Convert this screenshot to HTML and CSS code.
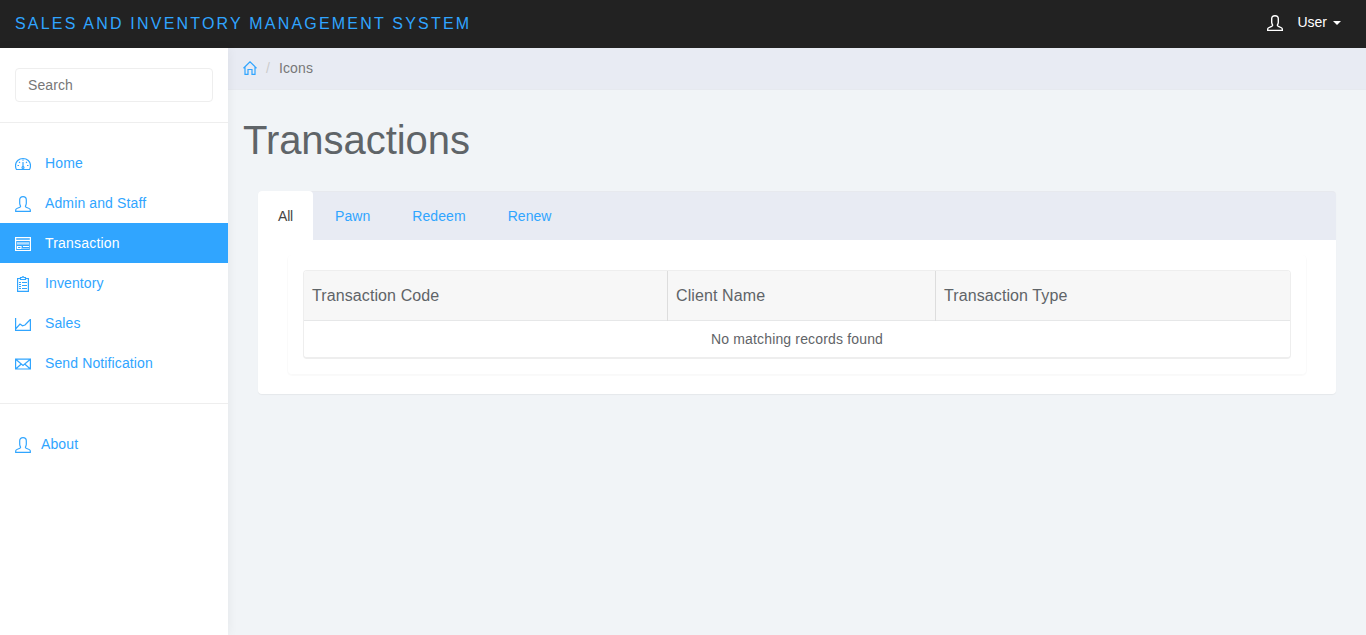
FILE: index.html
```html
<!DOCTYPE html>
<html lang="en">
<head>
<meta charset="utf-8">
<title>Transactions</title>
<link rel="stylesheet" href="styles.css">
</head>
<body>
<svg class="sprite" aria-hidden="true">
  <symbol id="user" viewBox="0 0 16 16"><path d="M5.600 10.500c-.1-1.200-.9-1.700-.9-3.200V3.800C4.700 1.800 6 .7 8 .7s3.300 1.100 3.300 3.100v3.500c0 1.500-.8 2-.9 3.200.1.700.8.900 2 1.300 2 .7 2.900 1.200 2.900 2v1.600H.7v-1.600c0-.8.9-1.300 2.900-2 1.200-.4 1.900-.6 2-1.300z"/></symbol>
</svg>
<header class="navbar">
  <a class="brand">SALES AND INVENTORY MANAGEMENT SYSTEM</a>
  <a class="account"><svg class="icon"><use href="#user"/></svg><span class="account-name">User</span><span class="caret"></span></a>
</header>
<div class="layout">
  <nav class="sidebar">
    <form class="search"><input class="search-input" type="text" placeholder="Search"></form>
    <ul class="menu">
      <li><a class="menu-link"><svg class="icon" viewBox="0 0 16 16"><path d="M1.500 13.500C.9 12.500.5 11.200.5 9.500a7.500 7 0 0 1 15 0c0 1.700-.4 3-1 4zM8 6v5M2.500 9.500H4M12 9.500h1.500M4 5.800l1 1M12 5.800l-1 1M8 3.500v1.300"/><circle cx="8" cy="11.500" r="1"/></svg><span class="label">Home</span></a></li>
      <li><a class="menu-link"><svg class="icon"><use href="#user"/></svg><span class="label">Admin and Staff</span></a></li>
      <li><a class="menu-link active"><svg class="icon" viewBox="0 0 16 16"><path d="M.6 1.500h14.800v13H.6zM1 4.500h14M2 7h12M2.500 10.500H6v2H2.500zM8 10.500h6"/><path d="M1 3h14M2 8.200h12M7 12.500h7" opacity=".5"/></svg><span class="label">Transaction</span></a></li>
      <li><a class="menu-link"><svg class="icon" viewBox="0 0 16 16"><path d="M5 2.500H2.600v12.900h10.800V2.500H11M5.500 3.500v-2H7L8 .6l1 .9h1.500v2zM4 6.500h2M4 8.500h2M4 10.500h2M4 12.500h2M7 6.500h5M7 9.500h5M7 12.500h5"/></svg><span class="label">Inventory</span></a></li>
      <li><a class="menu-link"><svg class="icon" viewBox="0 0 16 16"><path d="M.6 2v12.300h14.800V3M1 12.500l4-4.500 2.500 1.800 2.500-.8 5.300-5.500"/></svg><span class="label">Sales</span></a></li>
      <li><a class="menu-link"><svg class="icon" viewBox="0 0 16 16"><path d="M.6 3.200h14.800v9.800H.6zM1 3.500l7 6 7-6M1 12.700l5-4.500M15 12.700l-5-4.500"/></svg><span class="label">Send Notification</span></a></li>
    </ul>
    <div class="menu-footer"><a class="menu-link about"><svg class="icon"><use href="#user"/></svg><span class="label">About</span></a></div>
  </nav>
  <main class="main">
    <div class="breadcrumb"><svg class="icon home" viewBox="0 0 14 14"><path d="M.5 7.200L7 .8l6.500 6.400M2 6v7.400h3V8.500h4v4.900h3V6"/></svg><span class="slash">/</span><span class="crumb">Icons</span></div>
    <h1 class="title">Transactions</h1>
    <section class="panel">
      <div class="tabs"><a class="tab selected">All</a><a class="tab">Pawn</a><a class="tab">Redeem</a><a class="tab">Renew</a></div>
      <div class="panel-body">
        <div class="inner-panel">
          <div class="table">
            <div class="table-head"><div class="cell">Transaction Code</div><div class="cell">Client Name</div><div class="cell">Transaction Type</div></div>
            <div class="empty">No matching records found</div>
          </div>
        </div>
      </div>
    </section>
  </main>
</div>
</body>
</html>
```
FILE: styles.css
```css
* { box-sizing: border-box; }
body { margin: 0; background: #f1f4f7; color: #5f6468; font: 14px/20px "Liberation Sans", Arial, sans-serif; overflow: hidden; }
.sprite { position: absolute; width: 0; height: 0; }
.icon { width: 16px; height: 16px; flex: none; fill: none; stroke: currentColor; stroke-width: 1.2; }
.navbar { height: 48px; background: #222; display: flex; justify-content: space-between; padding: 0 25px 0 15px; }
.brand { color: #30a5ff; font-size: 16px; line-height: 48px; letter-spacing: 2.2px; white-space: nowrap; }
.account { display: flex; align-items: center; color: #fff; height: 44px; }
.account .icon { margin-top: 2px; stroke-width: 1.4; }
.account-name { margin-left: 14px; }
.caret { border: 4px solid transparent; border-top-color: #fff; border-bottom: 0; margin: 2px 0 0 6px; }
.layout { display: flex; height: 587px; }
.sidebar { width: 228px; flex: none; background: #fff; box-shadow: 1px 0 10px rgba(0,0,0,.05); z-index: 1; }
.search { margin: 0; padding: 20px 15px; border-bottom: 1px solid #eee; height: 75px; }
.search-input { display: block; width: 198px; height: 34px; padding: 6px 12px; border: 1px solid #eee; border-radius: 4px; font: inherit; letter-spacing: .1px; }
.search-input::placeholder { color: #777; opacity: 1; }
.menu { list-style: none; margin: 0; padding: 20px 0; border-bottom: 1px solid #eee; height: 281px; }
.menu-link { display: flex; align-items: center; height: 40px; padding: 0 15px; color: #30a5ff; letter-spacing: .12px; }
.menu-link .icon { margin-top: 2px; }
.label { margin-left: 14px; }
.menu-link.active { background: #30a5ff; color: #fff; letter-spacing: .2px; }
.menu-footer { padding-top: 20px; }
.about .label { margin-left: 10px; }
.main { flex: 1; min-width: 0; }
.breadcrumb { display: flex; height: 42px; padding: 10px 15px; background: #e8ebf3; box-shadow: inset 0 -1px #e6e9ef; }
.icon.home { width: 14px; height: 14px; margin-top: 3px; color: #30a5ff; }
.slash { color: #ccc; margin-left: 9px; }
.crumb { color: #777; margin-left: 9px; letter-spacing: .15px; }
.title { margin: 28px 0 0 15px; font-size: 40px; font-weight: 400; line-height: 44px; height: 73px; letter-spacing: -.05px; }
.panel { margin: 0 30px; height: 203px; background: #fff; border-radius: 4px; box-shadow: 0 1px 1px rgba(0,0,0,.05); }
.tabs { display: flex; height: 49px; background: #e8ebf3; border-radius: 4px 4px 0 0; color: #30a5ff; line-height: 50px; box-shadow: inset 0 1px #e7e9ee; }
.tab { padding: 0 20px; margin-right: 2px; letter-spacing: .07px; }
.tab.selected { background: #fff; color: #444; border-radius: 4px 4px 0 0; letter-spacing: -.2px; }
.panel-body { padding: 15px 30px; }
.inner-panel { height: 119px; padding: 15px; border-radius: 4px; box-shadow: 0 1px 1px 1px rgba(0,0,0,.025); }
.table { height: 89px; border: 1px solid #eee; border-bottom-width: 2px; border-radius: 4px; overflow: hidden; }
.table-head { display: grid; grid-template-columns: 364px 268px 1fr; height: 50px; background: #f7f7f7; border-bottom: 1px solid #e6e7e8; font-size: 16px; letter-spacing: .1px; }
.cell { padding: 0 8px; line-height: 50px; border-right: 1px solid #ddd; }
.cell:last-child { border-right: 0; }
.empty { text-align: center; line-height: 37px; letter-spacing: .16px; }
```
